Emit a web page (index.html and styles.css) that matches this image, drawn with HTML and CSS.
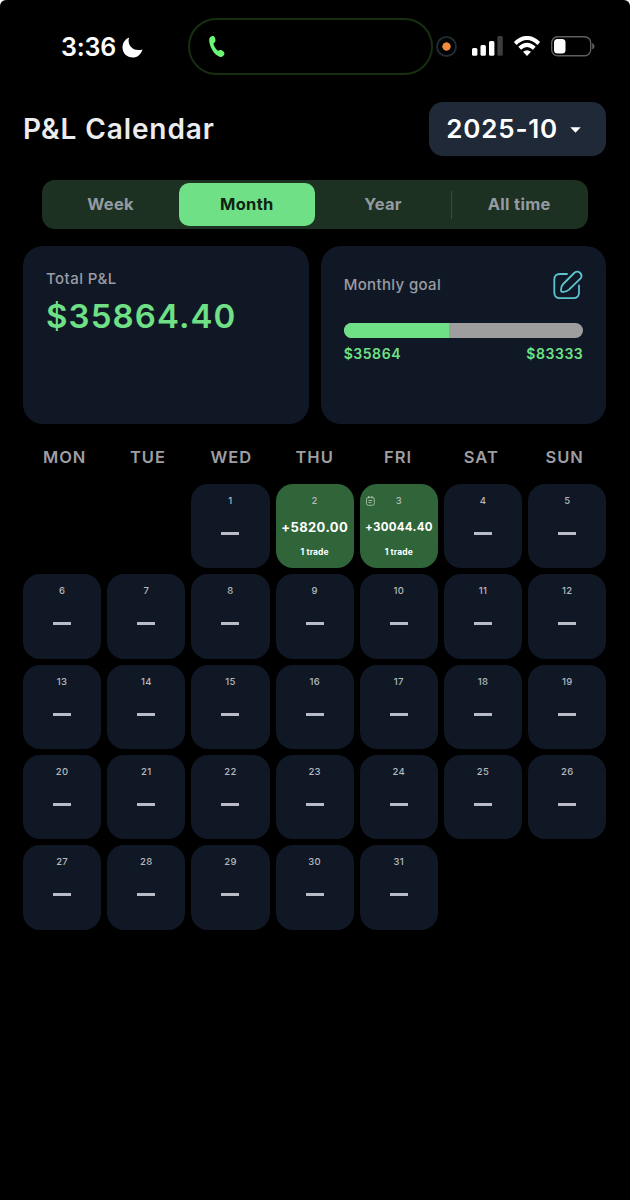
FILE: index.html
```
<!DOCTYPE html>
<html lang="en">
<head>
    <meta charset="UTF-8">
    <meta name="viewport" content="width=device-width, initial-scale=1.0">
    <title>P&amp;L Calendar</title>
    <link rel="stylesheet" href="styles.css">
</head>
<body>
    <div class="screen">
        <div class="status-bar">
            <span class="clock">3:36</span>
            <svg class="moon" width="21" height="21" viewBox="0 0 21 21">
                <path d="M7.2 .4C4.6 6.8 10.6 15.600 20.500 12.400C18.900 17.600 15.200 20.500 10.700 20.500C5 20.500 .5 16.200 .5 10.500C.5 5.900 3 1.900 7.200 .4z" fill="#fff"/>
            </svg>
            <div class="island">
                <svg width="18" height="23" viewBox="0 0 18 23">
                    <path d="M1.300 3.600C2 1.600 4.300 .600 5.800 1.300C7.300 2.500 7.800 5 7.300 6.600C6.800 7.700 5.500 7.900 5.500 9C6 11.500 8 14.600 9.900 15.700C10.900 16.100 11.600 15 12.900 15.100C14.500 15.400 16.300 17 16.500 18.400C16.400 20.400 14.300 22.100 12.100 21.900C5.600 20.500 .3 9.500 1.300 3.600z" fill="#6cf673"/>
                </svg>
            </div>
            <span class="rec-dot"></span>
            <svg class="signal" width="31" height="20" viewBox="0 0 31 20">
                <rect x="0" y="12" width="5.400" height="7.700" rx="1.500" fill="#fff"/>
                <rect x="8.500" y="9" width="5.400" height="10.700" rx="1.500" fill="#fff"/>
                <rect x="17" y="5" width="5.400" height="14.700" rx="1.500" fill="#fff"/>
                <rect x="25.400" y="0" width="5.400" height="19.700" rx="1.500" fill="#3d3d3d"/>
            </svg>
            <svg class="wifi" width="28" height="21" viewBox="0 0 28 21">
                <path d="M2.200 7.400Q14-3.400 25.800 7.400" fill="none" stroke="#fff" stroke-width="4"/>
                <path d="M6.700 12.300Q14 5.600 21.300 12.300" fill="none" stroke="#fff" stroke-width="4"/>
                <path d="M10 15.800Q14 12.600 18 15.800L14 20z" fill="#fff"/>
            </svg>
            <svg class="battery" width="44" height="21" viewBox="0 0 44 21">
                <rect x=".7" y=".7" width="39" height="19" rx="6" fill="none" stroke="#5e5e5e" stroke-width="1.400"/>
                <rect x="3" y="3" width="11.500" height="14.400" rx="3.500" fill="#fff"/>
                <path d="M41.200 7Q43.500 8 43.500 10.200Q43.500 12.500 41.200 13.500z" fill="#5e5e5e"/>
            </svg>
        </div>

        <div class="header">
            <h1>P&amp;L Calendar</h1>
            <button class="month-picker">
                <span>2025-10</span>
                <svg width="11" height="6" viewBox="0 0 11 6"><path d="M.3 .2H10.700L5.500 5.800z" fill="#fff"/></svg>
            </button>
        </div>

        <div class="tabs">
            <button class="tab">Week</button>
            <button class="tab active">Month</button>
            <button class="tab">Year</button>
            <button class="tab divided">All time</button>
        </div>

        <div class="cards">
            <div class="card">
                <div class="card-label">Total P&amp;L</div>
                <div class="total">$35864.40</div>
            </div>
            <div class="card goal">
                <div class="goal-top">
                    <span class="card-label">Monthly goal</span>
                    <svg width="30" height="30" viewBox="0 0 30 30" fill="none" stroke="#5cc4cf" stroke-width="1.800" stroke-linecap="round" stroke-linejoin="round">
                        <path d="M14 4H7Q1.300 4 1.300 9.700V22.500Q1.300 28.200 7 28.200H20.300Q26 28.200 26 22.500V15.500"/>
                        <path d="M8.300 21.600Q7.400 16.900 10.200 14L21.700 2.500Q24.100 .8 26.700 2.500Q29.800 5.500 27.600 8.300L16 19.700Q13 22.400 8.300 21.600z"/>
                    </svg>
                </div>
                <div class="progress"><div class="progress-fill"></div></div>
                <div class="goal-values">
                    <span>$35864</span>
                    <span>$83333</span>
                </div>
            </div>
        </div>

        <div class="weekdays">
            <span>MON</span>
            <span>TUE</span>
            <span>WED</span>
            <span>THU</span>
            <span>FRI</span>
            <span>SAT</span>
            <span>SUN</span>
        </div>

        <div class="days" id="days"></div>
    </div>

    <script>
        const trades = {
            2: { pnl: '+5820.00', count: '1 trade' },
            3: { pnl: '+30044.40', count: '1 trade', note: true }
        };
        const noteIcon = `
            <svg class="note" width="9" height="10" viewBox="0 0 9 10" fill="none" stroke="#b9cdbb" stroke-width=".8" stroke-linecap="round">
                <rect x=".5" y="1.300" width="7.800" height="8" rx="2"/>
                <path d="M2.800 .4V2M6 .4V2M2.800 4.500H6M2.800 6.500H5"/>
            </svg>`;
        const days = document.getElementById('days');

        // October starts on a Wednesday
        for (let day = 1; day <= 31; day++) {
            const cell = document.createElement('div');
            const trade = trades[day];
            cell.className = trade ? 'day win' : 'day';
            if (day === 1) cell.classList.add('first');
            cell.innerHTML = `<span class="date">${day}</span>`;
            if (trade) {
                const size = trade.pnl.length > 8 ? 'pnl small' : 'pnl';
                cell.innerHTML += `<span class="${size}">${trade.pnl}</span><span class="count">${trade.count}</span>`;
                if (trade.note) cell.innerHTML += noteIcon;
            } else {
                cell.innerHTML += '<span class="empty"></span>';
            }
            days.appendChild(cell);
        }
    </script>
</body>
</html>
```
FILE: styles.css
```
* {
    box-sizing: border-box;
}
body {
    margin: 0;
    background: #fff;
    font-family: Inter, "Liberation Sans", sans-serif;
}
button {
    border: none;
    padding: 0;
    font-family: inherit;
    cursor: pointer;
}
svg {
    display: block;
    flex: none;
}
.screen {
    width: 630px;
    height: 1200px;
    padding: 0 23.7px 0 23px;
    background: #000;
    border-radius: 6px 6px 0 0;
    overflow: hidden;
}
.status-bar {
    display: flex;
    align-items: center;
    height: 92px;
    padding-left: 38px;
}
.clock {
    width: 61px;
    color: #fff;
    font-size: 25px;
    font-weight: 600;
    line-height: 32px;
    letter-spacing: -0.2px;
    white-space: nowrap;
    padding-top: 1px;
}
.moon {
    margin-top: 2px;
}
.island {
    display: flex;
    align-items: center;
    width: 245px;
    height: 57px;
    margin-left: 45px;
    padding-left: 18px;
    border: 2px solid #16300f;
    border-radius: 29px;
}
.rec-dot {
    width: 21px;
    height: 21px;
    margin-left: 3px;
    border: 2px solid #202a31;
    border-radius: 50%;
    background: radial-gradient(circle, #f08a3c 3.8px, #000 4.500px);
}
.signal {
    margin-left: 15px;
}
.wifi {
    margin-left: 10px;
}
.battery {
    margin-left: 10px;
}
.header {
    display: flex;
    justify-content: space-between;
    align-items: center;
    height: 54px;
    margin-top: 10px;
}
h1 {
    margin: 0;
    color: #ececee;
    font-size: 28px;
    font-weight: 600;
    letter-spacing: 0.9px;
}
.month-picker {
    display: flex;
    align-items: center;
    gap: 12px;
    width: 177px;
    height: 54px;
    padding: 0 0 1px 17px;
    border-radius: 14px;
    background: #1f2937;
    color: #fff;
    font-size: 26px;
    font-weight: 600;
    letter-spacing: 0.8px;
}
.month-picker svg {
    margin-top: 2px;
}
.tabs {
    display: grid;
    grid-template-columns: repeat(4, 1fr);
    height: 49px;
    margin: 24px 18px 0 18.5px;
    padding: 3px 1px;
    border-radius: 13px;
    background: #1c3121;
}
.tab {
    padding-bottom: 1px;
    border-radius: 10px;
    background: none;
    color: #959ba3;
    font-size: 16.5px;
    font-weight: 700;
    letter-spacing: 0.3px;
}
.tab.active {
    background: #70e086;
    color: #0c2412;
}
.tab.divided {
    border-radius: 0;
    background: linear-gradient(#3a4a40, #3a4a40) 0 50% / 1px 28px no-repeat;
}
.cards {
    display: grid;
    grid-template-columns: 1fr 1fr;
    gap: 12px;
    margin-top: 17.3px;
}
.card {
    height: 177.5px;
    padding: 23px 23px 20px;
    border-radius: 20px;
    background: #101825;
}
.card-label {
    color: #9b9ca3;
    font-size: 15px;
    font-weight: 500;
    line-height: 20px;
    letter-spacing: 0.45px;
}
.goal .card-label {
    letter-spacing: 0.35px;
}
.total {
    margin-top: 5px;
    color: #70e086;
    font-size: 33px;
    font-weight: 600;
    line-height: 44px;
    letter-spacing: 1.1px;
}
.goal-top {
    display: flex;
    justify-content: space-between;
    align-items: center;
    height: 32px;
}
.progress {
    height: 15px;
    margin-top: 22px;
    border-radius: 8px;
    background: #9e9e9e;
    overflow: hidden;
}
.progress-fill {
    width: 44%;
    height: 100%;
    background: #70e086;
}
.goal-values {
    display: flex;
    justify-content: space-between;
    margin-top: 6px;
    color: #70e086;
    font-size: 14px;
    font-weight: 600;
    line-height: 19px;
    letter-spacing: 0.55px;
}
.weekdays {
    display: grid;
    grid-template-columns: repeat(7, 1fr);
    margin-top: 22px;
    color: #9e9ea3;
    font-size: 16.5px;
    font-weight: 600;
    line-height: 22px;
    letter-spacing: 1px;
    text-align: center;
}
.days {
    display: grid;
    grid-template-columns: repeat(7, 1fr);
    grid-auto-rows: 84.4px;
    gap: 6px;
    margin-top: 16px;
}
.day {
    position: relative;
    display: flex;
    flex-direction: column;
    align-items: center;
    padding-top: 10px;
    border-radius: 17px;
    background: #101825;
}
.day.first {
    grid-column: 3;
}
.day.win {
    background: #2f6538;
}
.date {
    color: #b4b8be;
    font-size: 9.5px;
    font-weight: 500;
    line-height: 14px;
    letter-spacing: 0.3px;
}
.empty {
    width: 18px;
    height: 3px;
    margin-top: 24px;
    background: #b9bbc6;
}
.pnl {
    margin-top: 10px;
    color: #fff;
    font-size: 13px;
    font-weight: 700;
    line-height: 18px;
    letter-spacing: 0.4px;
}
.pnl.small {
    font-size: 11.5px;
    letter-spacing: 0.3px;
}
.count {
    margin-top: 10px;
    color: #fff;
    font-size: 8.5px;
    font-weight: 700;
    line-height: 12px;
    letter-spacing: 0.1px;
}
.note {
    position: absolute;
    top: 12px;
    left: 6px;
}
```
